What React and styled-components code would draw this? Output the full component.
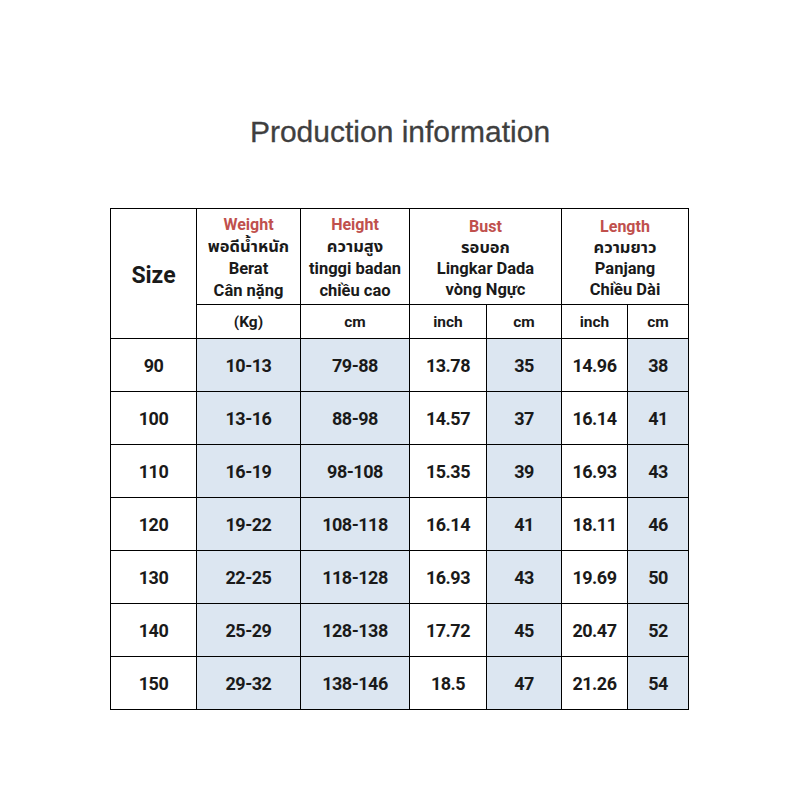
import React from "react";
import styled, { createGlobalStyle } from "styled-components";

const GlobalStyle = createGlobalStyle`
  html, body {
    margin: 0;
    padding: 0;
    background: #ffffff;
  }
`;

const rows = [
  ["90", "10-13", "79-88", "13.78", "35", "14.96", "38"],
  ["100", "13-16", "88-98", "14.57", "37", "16.14", "41"],
  ["110", "16-19", "98-108", "15.35", "39", "16.93", "43"],
  ["120", "19-22", "108-118", "16.14", "41", "18.11", "46"],
  ["130", "22-25", "118-128", "16.93", "43", "19.69", "50"],
  ["140", "25-29", "128-138", "17.72", "45", "20.47", "52"],
  ["150", "29-32", "138-146", "18.5", "47", "21.26", "54"],
];

// which body columns carry the blue fill
const shaded = [false, true, true, false, true, false, true];
const widths = [86, 104, 109, 77, 75, 66, 61];

const App = () => {
  return (
    <>
      <GlobalStyle />
      <Page>
        <Title>Production information</Title>
        <SizeTable>
          <colgroup>
            {widths.map((w, i) => (
              <col key={i} style={{ width: w }} />
            ))}
          </colgroup>
          <thead>
            <HeadRow>
              <SizeCell rowSpan={2}>Size</SizeCell>
              <HeadCell>
                <Red>Weight</Red>
                <Line>พอดีน้ำหนัก</Line>
                <Line>Berat</Line>
                <Line>Cân nặng</Line>
              </HeadCell>
              <HeadCell>
                <Red>Height</Red>
                <Line>ความสูง</Line>
                <Line>tinggi badan</Line>
                <Line>chiều cao</Line>
              </HeadCell>
              <HeadCell colSpan={2} $tight>
                <Red>Bust</Red>
                <Line>รอบอก</Line>
                <Line>Lingkar Dada</Line>
                <Line>vòng Ngực</Line>
              </HeadCell>
              <HeadCell colSpan={2} $tight>
                <Red>Length</Red>
                <Line>ความยาว</Line>
                <Line>Panjang</Line>
                <Line>Chiều Dài</Line>
              </HeadCell>
            </HeadRow>
            <UnitRow>
              <UnitCell>(Kg)</UnitCell>
              <UnitCell>cm</UnitCell>
              <UnitCell>inch</UnitCell>
              <UnitCell>cm</UnitCell>
              <UnitCell>inch</UnitCell>
              <UnitCell>cm</UnitCell>
            </UnitRow>
          </thead>
          <tbody>
            {rows.map((r) => (
              <BodyRow key={r[0]}>
                {r.map((v, i) => (
                  <Cell key={i} $shaded={shaded[i]}>
                    {v}
                  </Cell>
                ))}
              </BodyRow>
            ))}
          </tbody>
        </SizeTable>
      </Page>
    </>
  );
};

export default App;

const Page = styled.div`
  width: 800px;
  height: 800px;
  padding-top: 112px;
  box-sizing: border-box;
  display: flex;
  flex-direction: column;
  align-items: center;
`;

const Title = styled.h1`
  margin: 0 0 56px 0;
  height: 40px;
  line-height: 40px;
  font-family: "Liberation Sans", Arial, sans-serif;
  font-size: 30px;
  font-weight: 400;
  color: #3f3f3f;
  -webkit-text-stroke: 0.3px #3f3f3f;
`;

const SizeTable = styled.table`
  border-collapse: collapse;
  table-layout: fixed;
  width: 578px;
  margin-left: -1px;
  font-family: Roboto, "Noto Sans", "Noto Sans Thai", sans-serif;
  font-weight: 700;
  color: #1a1a1a;
  text-align: center;

  td, th {
    border: 1px solid #000;
    padding: 0;
  }
`;

const HeadRow = styled.tr`
  height: 96px;
`;

const UnitRow = styled.tr`
  height: 34px;
`;

const BodyRow = styled.tr`
  height: 53px;
`;

const SizeCell = styled.th`
  font-size: 23px;
  font-weight: 700;
  padding-top: 4px !important;
`;

const HeadCell = styled.th`
  font-size: 16.5px;
  font-weight: 700;
  line-height: ${(p) => (p.$tight ? "21px" : "22px")};
  vertical-align: middle;
  padding-top: 3px !important;
`;

const Red = styled.div`
  color: #c0504d;
  font-size: 16px;
`;

const Line = styled.div`
  color: #1a1a1a;
`;

const UnitCell = styled.th`
  font-size: 15.5px;
  font-weight: 700;
`;

const Cell = styled.td`
  font-size: 18px;
  letter-spacing: -0.5px;
  background: ${(p) => (p.$shaded ? "#dce6f1" : "#ffffff")};
`;
